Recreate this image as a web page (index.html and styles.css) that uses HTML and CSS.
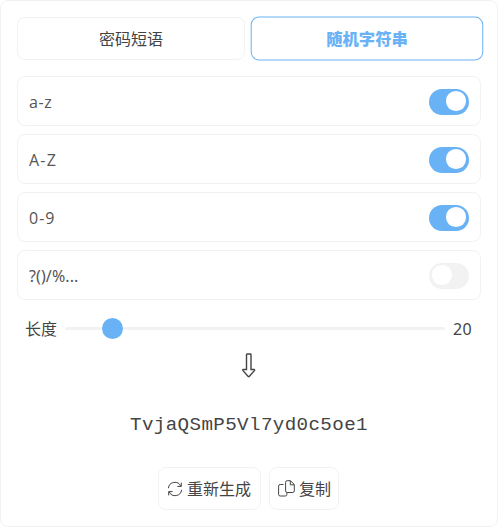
FILE: index.html
```html
<!DOCTYPE html>
<html lang="zh-CN">
<head>
<meta charset="utf-8">
<title>随机字符串</title>
<link rel="stylesheet" href="styles.css">
</head>
<body>
<main class="card">
  <div class="tabs">
    <button class="tab">密码短语</button>
    <button class="tab active">随机字符串</button>
  </div>
  <div class="options">
    <div class="option"><span class="label lower">a-z</span><span class="switch on"></span></div>
    <div class="option"><span class="label upper">A-Z</span><span class="switch on"></span></div>
    <div class="option"><span class="label digits">0-9</span><span class="switch on"></span></div>
    <div class="option"><span class="label symbols">?()/%...</span><span class="switch"></span></div>
  </div>
  <div class="length">
    <span class="caption">长度</span>
    <div class="track"><span class="thumb"></span></div>
    <span class="value">20</span>
  </div>
  <svg class="arrow" width="16" height="26" viewBox="0 0 16 26"><path d="M5.5 2.6Q5.5 2 6.1 2H9.4Q10 2 10 2.6V17.5H13Q14 17.7 13.4 18.6L8.2 24.4Q7.7 24.9 7.2 24.4L2 18.6Q1.4 17.7 2.4 17.5H5.5Z"/></svg>
  <output class="result">TvjaQSmP5Vl7yd0c5oe1</output>
  <div class="actions">
    <button class="action regenerate">
      <svg width="16" height="16" viewBox="0 0 16 16"><path d="M1.4 7.2A6.5 6.5 0 0 1 13.8 5.2M14.3 1.6V5.4H10.3M14.6 8.8A6.5 6.5 0 0 1 2.2 10.8M1.7 14.4V10.6H5.7"/></svg>
      <span>重新生成</span>
    </button>
    <button class="action copy">
      <svg width="17" height="17" viewBox="0 0 17 17"><path d="M5.5 4.5H2.2Q.6 4.5.6 6.1V14.4Q.6 16 2.2 16H7.3Q8.9 16 8.9 14.4V12.5M9.2.7H12.5L16.3 4.5V10.9Q16.3 12.5 14.7 12.5H9.2Q7.6 12.5 7.6 10.9V2.3Q7.6.7 9.2.7ZM12.3.9V4.8H16.1"/></svg>
      <span>复制</span>
    </button>
  </div>
</main>
</body>
</html>
```
FILE: styles.css
```css
* { box-sizing: border-box; }
body {
  margin: 0;
  background: #fff;
  color: #444;
  font: 16px/24px "Noto Sans", "Noto Sans CJK SC", sans-serif;
}
button {
  margin: 0;
  background: #fff;
  color: inherit;
  font: inherit;
  border: 1px solid #f2f2f2;
  border-radius: 8px;
}
.card {
  width: 498px;
  height: 527px;
  padding: 16px;
  border: 1px solid #f2f2f2;
  border-radius: 8px;
  display: flex;
  flex-direction: column;
}
.card > * { flex: none; }
.tabs { display: flex; gap: 8px; height: 43px; }
.tab { flex: 1; padding: 0; }
.tab.active {
  color: #6ab2f6;
  border-color: #6ab2f6;
  font-weight: 900;
  transform: scale(1.02);
}
.options { display: grid; gap: 8px; margin-top: 16px; }
.option {
  height: 50px;
  padding: 1px 11px 0;
  border: 1px solid #f2f2f2;
  border-radius: 8px;
  display: flex;
  align-items: center;
  justify-content: space-between;
}
.label { font-family: "Open Sans", sans-serif; color: #555; }
.lower { letter-spacing: .6px; }
.upper { letter-spacing: 1.2px; }
.digits { letter-spacing: 1px; }
.symbols { font-family: "Noto Sans", sans-serif; letter-spacing: .1px; }
.switch {
  width: 40px;
  height: 26px;
  padding: 0 3.5px 1px 3px;
  border-radius: 13px;
  background: #f2f2f2;
  display: flex;
  align-items: center;
}
.switch::before {
  content: "";
  width: 19.5px;
  height: 19.5px;
  border-radius: 50%;
  background: #fff;
}
.switch.on { background: #6ab2f6; justify-content: flex-end; }
.length {
  display: flex;
  align-items: center;
  gap: 8px;
  height: 24px;
  margin-top: 16px;
  padding: 0 8px;
}
.caption { padding-top: 1px; }
.track {
  flex: 1;
  height: 3px;
  border-radius: 2px;
  background: #f2f2f2;
  display: flex;
  align-items: center;
}
.thumb {
  flex: none;
  width: 21px;
  height: 21px;
  margin-left: 37px;
  border-radius: 50%;
  background: #6ab2f6;
}
.value { width: 20px; padding-top: 1px; letter-spacing: .4px; }
.arrow { align-self: center; margin-top: 12px; }
.arrow path { fill: none; stroke: #444; stroke-width: 1.4; }
.result {
  margin-top: 33px;
  text-align: center;
  font: 19.2px/28px "Liberation Mono", monospace;
  letter-spacing: .38px;
}
.actions {
  display: flex;
  justify-content: center;
  gap: 8px;
  margin-top: 28px;
  padding-right: 1px;
}
.action {
  height: 43px;
  padding: 0 7px 0 8px;
  display: flex;
  align-items: center;
  justify-content: flex-start;
  gap: 4px;
}
.regenerate { width: 103px; }
.copy { width: 70px; }
.action svg { flex: none; fill: none; stroke: #444; stroke-width: 1; }
```
